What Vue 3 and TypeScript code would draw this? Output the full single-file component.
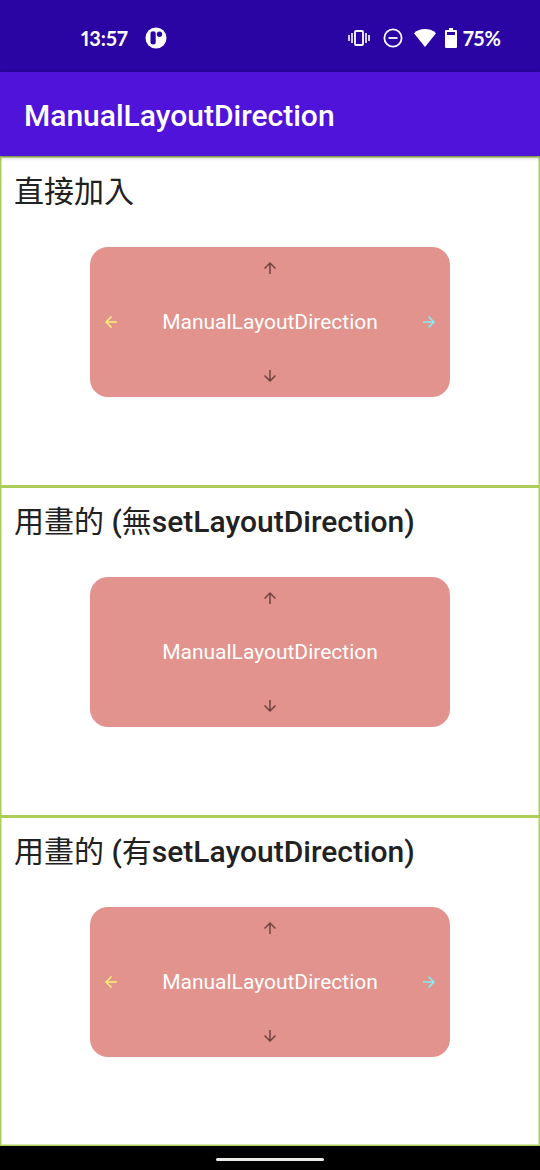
<script setup lang="ts">
interface TitlePart {
  text: string
  han: boolean
}

interface Demo {
  id: string
  title: TitlePart[]
  horizontal: boolean
}

const label = 'ManualLayoutDirection'

function splitTitle(title: string): TitlePart[] {
  const runs = title.match(/\p{Script=Han}+|\P{Script=Han}+/gu) ?? []
  return runs.map((text) => ({ text, han: /\p{Script=Han}/u.test(text) }))
}

const demos: Demo[] = [
  { id: 'direct', title: splitTitle('直接加入'), horizontal: true },
  { id: 'drawn', title: splitTitle('用畫的 (無setLayoutDirection)'), horizontal: false },
  { id: 'drawn-set', title: splitTitle('用畫的 (有setLayoutDirection)'), horizontal: true },
]

const arrows = {
  up: 'M4 12l1.41 1.41L11 7.83V20h2V7.83l5.58 5.59L20 12l-8-8-8 8z',
  down: 'M20 12l-1.41-1.41L13 16.17V4h-2v12.17l-5.58-5.59L4 12l8 8 8-8z',
  left: 'M20 11H7.83l5.59-5.59L12 4l-8 8 8 8 1.41-1.41L7.83 13H20v-2z',
  right: 'M12 4l-1.41 1.41L16.17 11H4v2h12.17l-5.58 5.59L12 20l8-8z',
}
</script>

<template>
  <div class="screen">
    <div class="status">
      <time class="clock">13:57</time>
      <svg class="app-mark" viewBox="0 0 22 22" aria-hidden="true">
        <circle cx="11" cy="11" r="10.5" fill="#fff" />
        <path d="M5.5 6.500q0-2.300 2.600-2.300 2.600 0 2.600 2.300v9q0 2-2.600 2-2.600 0-2.600-2z" fill="#2b05a3" />
        <circle cx="14.500" cy="7.200" r="2.700" fill="#2b05a3" />
      </svg>
      <div class="indicators">
        <svg width="22" height="18" viewBox="0 0 22 18" fill="none" stroke="#fff" aria-hidden="true">
          <rect x="7" y="2" width="8" height="14" rx="1" stroke-width="1.800" />
          <path d="M1 6v6M4 4v10M18 4v10M21 6v6" stroke-width="1.600" />
        </svg>
        <svg class="dnd" width="20" height="20" viewBox="0 0 20 20" fill="none" stroke="#fff" stroke-width="1.800" aria-hidden="true">
          <circle cx="10" cy="10" r="8.600" />
          <path d="M5.500 10h9" />
        </svg>
        <svg class="wifi" width="24" height="20" viewBox="0 0 24 20" fill="#fff" aria-hidden="true">
          <path d="M12 19L1 5.200Q5.500 1 12 1t11 4.200z" />
        </svg>
        <svg class="battery" width="12" height="20" viewBox="0 0 12 20" aria-hidden="true">
          <path d="M4 0h4v2h3q1 0 1 1v16q0 1-1 1H1q-1 0-1-1V3q0-1 1-1h3z" fill="#fff" />
          <path d="M2 4h8v3H2z" fill="#2b05a3" />
        </svg>
        <span class="percent">75%</span>
      </div>
    </div>
    <header class="app-bar">
      <h1>{{ label }}</h1>
    </header>
    <main class="demos">
      <section v-for="demo in demos" :key="demo.id" class="demo">
        <h2><span v-for="(part, i) in demo.title" :key="i" :class="{ han: part.han }">{{ part.text }}</span></h2>
        <div class="card">
          <svg class="arrow up" viewBox="0 0 24 24" aria-hidden="true"><path :d="arrows.up" /></svg>
          <svg v-if="demo.horizontal" class="arrow left" viewBox="0 0 24 24" aria-hidden="true"><path :d="arrows.left" /></svg>
          <span class="label">{{ label }}</span>
          <svg v-if="demo.horizontal" class="arrow right" viewBox="0 0 24 24" aria-hidden="true"><path :d="arrows.right" /></svg>
          <svg class="arrow down" viewBox="0 0 24 24" aria-hidden="true"><path :d="arrows.down" /></svg>
        </div>
      </section>
    </main>
    <footer class="nav-bar"><span class="handle"></span></footer>
  </div>
</template>

<style>
body {
  margin: 0;
}
</style>

<style scoped>
.screen {
  display: flex;
  flex-direction: column;
  min-height: 100vh;
  background: #fff;
  font-family: Roboto, "Noto Sans CJK TC", sans-serif;
}

.status {
  display: flex;
  align-items: center;
  box-sizing: border-box;
  height: 72px;
  padding: 4px 39px 0 81px;
  background: #2b05a3;
  color: #fff;
  font-family: Lato, sans-serif;
  font-size: 20px;
  font-weight: 700;
  font-variant-numeric: proportional-nums;
  line-height: 24px;
}

.app-mark {
  width: 22px;
  height: 22px;
  margin-left: 17px;
}

.indicators {
  display: flex;
  align-items: center;
  margin-left: auto;
}

.dnd {
  margin-left: 13px;
}

.wifi {
  margin-left: 10px;
}

.battery {
  margin-left: 8px;
}

.percent {
  margin-left: 6px;
}

.app-bar {
  position: relative;
  display: flex;
  align-items: center;
  box-sizing: border-box;
  height: 84px;
  padding: 4px 24px 0;
  background: #5013da;
  box-shadow: 0 1px 4px rgba(0, 0, 0, 0.4);
}

h1 {
  margin: 0;
  color: #fff;
  font-size: 30px;
  font-weight: 500;
  line-height: 36px;
}

.demos {
  display: flex;
  flex: 1;
  flex-direction: column;
  border: 1px solid #aace57;
  box-shadow: inset 0 0 0 1px #d6e8b0;
}

.demo {
  display: grid;
  flex: 1;
}

.demo:first-child {
  padding-top: 1px;
}

.demo + .demo {
  border-top: 3px solid #aace57;
}

h2 {
  grid-area: 1 / 1;
  align-self: start;
  margin: 0;
  padding: 12px 13px;
  color: #212121;
  font-size: 30px;
  font-weight: 500;
  line-height: 44px;
  white-space: pre-wrap;
}

.han {
  font-weight: 400;
}

.card {
  display: grid;
  grid-area: 1 / 1;
  grid-template-columns: 18px 1fr 18px;
  grid-template-rows: 18px 1fr 18px;
  place-items: center;
  place-self: center;
  box-sizing: border-box;
  width: 67%;
  height: 150px;
  padding: 12px;
  border-radius: 18px;
  background: #e2938d;
}

.label {
  grid-area: 2 / 2;
  color: #fff;
  font-size: 21px;
  line-height: 24px;
}

.arrow {
  width: 18px;
  height: 18px;
  fill: #71413f;
}

.up {
  grid-area: 1 / 2;
}

.down {
  grid-area: 3 / 2;
}

.left {
  grid-area: 2 / 1;
  fill: #fff176;
}

.right {
  grid-area: 2 / 3;
  fill: #80f0fa;
}

.nav-bar {
  display: flex;
  align-items: center;
  justify-content: center;
  box-sizing: border-box;
  height: 24px;
  padding-top: 3px;
  background: #000;
}

.handle {
  width: 20%;
  height: 3px;
  border-radius: 2px;
  background: #ebebe8;
}
</style>
